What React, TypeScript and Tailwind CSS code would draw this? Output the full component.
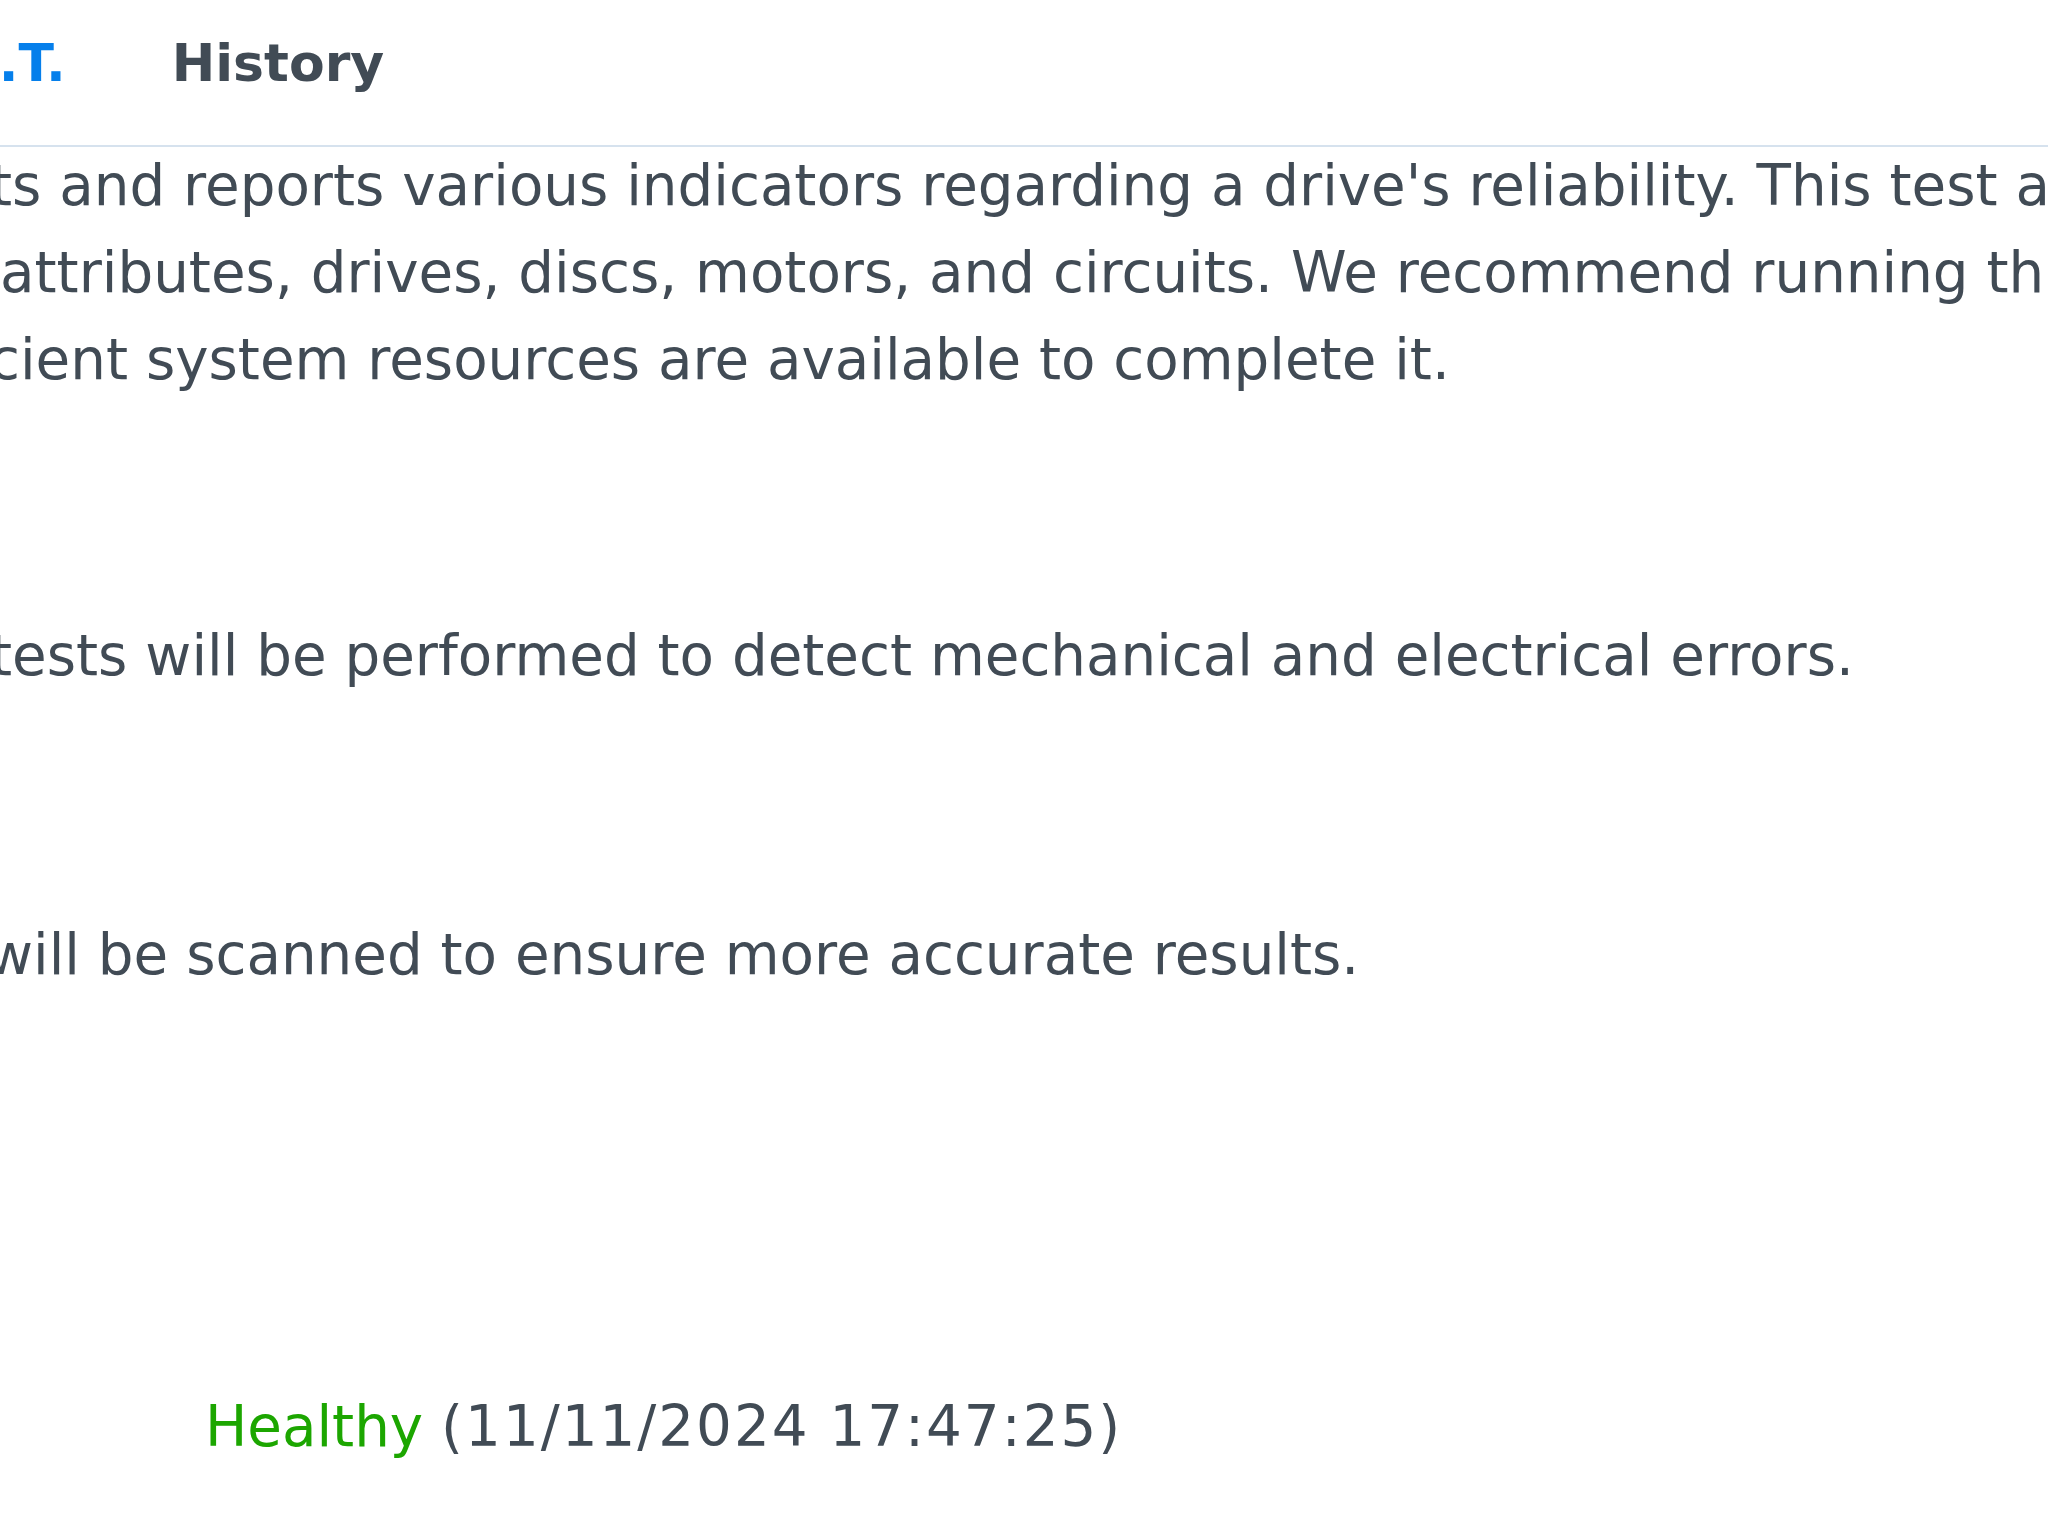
const font = { fontFamily: '"DejaVu Sans", Verdana, sans-serif' };

const intro = [
  { text: "ts and reports various indicators regarding a drive's reliability. This test also analyzes", cls: "-ml-[10px]" },
  { text: "attributes, drives, discs, motors, and circuits. We recommend running this test when", cls: "ml-0" },
  { text: "cient system resources are available to complete it.", cls: "-ml-[11px]" },
];

export default function App() {
  return (
    <div
      className="h-[1536px] w-[2048px] overflow-hidden bg-white text-[#414b55]"
      style={font}
    >
      {/* tab strip */}
      <div className="border-b-2 border-[#d6e2ee] pt-[32px] pb-[51px]">
        <div className="-ml-[232px] flex items-center gap-[106px] whitespace-nowrap text-[52px] leading-[62px] font-bold">
          <span className="text-[#057feb]">S.M.A.R.T.</span>
          <span>History</span>
        </div>
      </div>

      <div className="-mt-[5px] whitespace-nowrap text-[56.3px] leading-[87px]">
        {intro.map((l) => (
          <div key={l.text} className={l.cls}>
            {l.text}
          </div>
        ))}

        <div className="mt-[209px] -ml-[10px]">
          tests will be performed to detect mechanical and electrical errors.
        </div>

        <div className="mt-[212px] -ml-[13px]">
          will be scanned to ensure more accurate results.
        </div>

        <div className="mt-[385px] pl-[205px]">
          <span className="text-[#1ca600]">Healthy</span>{" "}
          <span className="tracking-[2px]">(11/11/2024 17:47:25)</span>
        </div>
      </div>
    </div>
  );
}
